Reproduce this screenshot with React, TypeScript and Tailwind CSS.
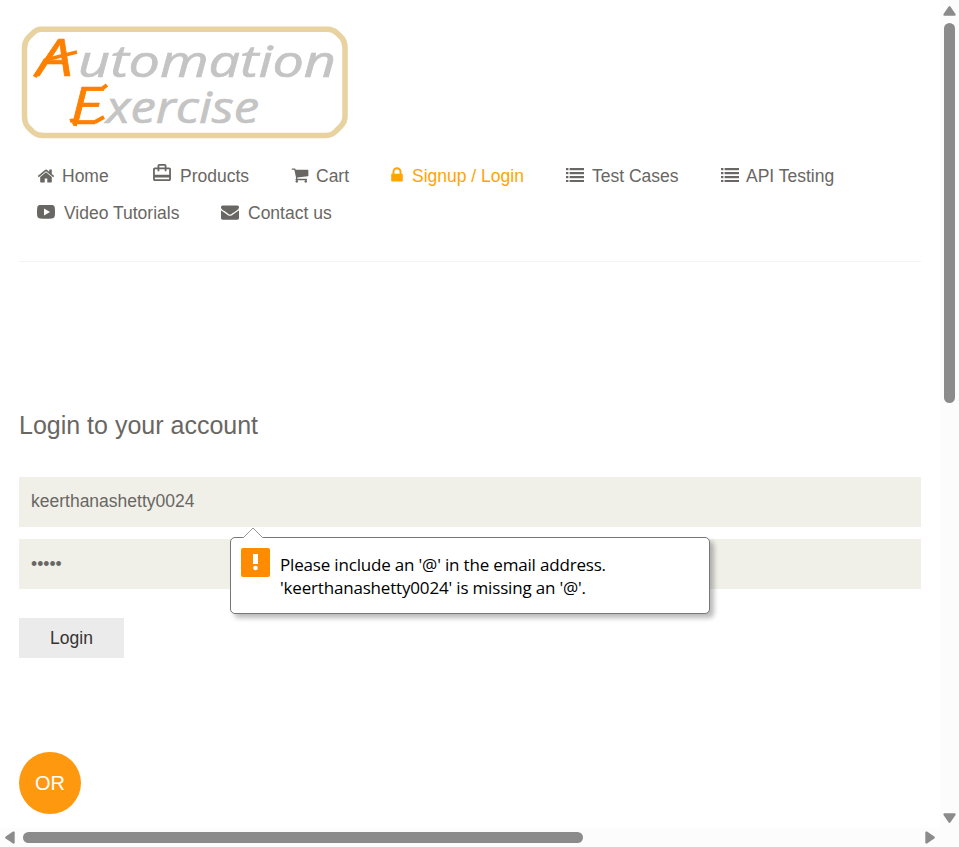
import type { ReactNode } from "react";

const HOME =
  "M1472 992v480q0 26-19 45t-45 19h-384v-384h-256v384h-384q-26 0-45-19t-19-45v-480q0-1 .5-3t.5-3l575-474 575 474q1 2 1 6zm223-69l-62 74q-8 9-21 11h-3q-13 0-21-7l-692-577-692 577q-12 8-24 7-13-2-21-11l-62-74q-8-10-7-23.5t11-21.5l719-599q32-26 76-26t76 26l244 204v-195q0-14 9-23t23-9h192q14 0 23 9t9 23v408l219 182q10 8 11 21.5t-7 23.5z";
const CART =
  "M704 1536q0 52-38 90t-90 38-90-38-38-90 38-90 90-38 90 38 38 90zm896 0q0 52-38 90t-90 38-90-38-38-90 38-90 90-38 90 38 38 90zm128-1088v512q0 24-16.5 42.5t-40.5 21.5l-1044 122q13 60 13 70 0 16-24 64h920q26 0 45 19t19 45-19 45-45 19h-1024q-26 0-45-19t-19-45q0-11 8-31.5t16-36 21.5-40 15.5-29.5l-177-823h-204q-26 0-45-19t-19-45 19-45 45-19h256q16 0 28.5 6.5t19.5 15.5 13 24.5 8 26 5.5 29.5 4.5 26h1201q26 0 45 19t19 45z";
const LOCK =
  "M640 768h512v-192q0-106-75-181t-181-75-181 75-75 181v192zm832 96v576q0 40-28 68t-68 28h-960q-40 0-68-28t-28-68v-576q0-40 28-68t68-28h32v-192q0-184 132-316t316-132 316 132 132 316v192h32q40 0 68 28t28 68z";
const ENVELOPE =
  "M1792 710v794q0 66-47 113t-113 47h-1472q-66 0-113-47t-47-113v-794q44 49 101 87 362 246 497 345 57 42 92.5 65.5t94.5 48 110 24.5h2q51 0 110-24.5t94.5-48 92.5-65.5q170-123 498-345 57-39 100-87zm0-294q0 79-49 151t-122 123q-376 261-468 325-10 7-42.5 31t-54 38.5-52 32.5-57.5 27-50 9h-2q-23 0-50-9t-57.5-27-52-32.5-54-38.5-42.5-31q-91-64-262-182.5t-205-142.5q-62-42-117-115.5t-55-136.5q0-78 41.5-130t118.5-52h1472q65 0 112.5 47t47.5 113z";

function Glyph({ d, box = "0 0 1792 1792", className }: { d: string; box?: string; className: string }) {
  return (
    <svg viewBox={box} className={`shrink-0 fill-current ${className}`}>
      <path d={d} />
    </svg>
  );
}

function ListIcon() {
  return (
    <svg viewBox="0 0 18 14" className="mb-px h-3.5 w-[18px] shrink-0 fill-current">
      {[0, 4, 8, 12].map((y) => (
        <g key={y}>
          <rect x="0" y={y} width="2.4" height="2.2" />
          <rect x="3.6" y={y} width="14.4" height="2.2" />
        </g>
      ))}
    </svg>
  );
}

function NavItem({ icon, label, className }: { icon: ReactNode; label: string; className: string }) {
  return (
    <li className={`flex h-[37px] shrink-0 items-center whitespace-nowrap ${className}`}>
      {icon}
      <span className="pt-0.5">{label}</span>
    </li>
  );
}

function Logo() {
  return (
    <svg viewBox="0 0 328 114" className="h-[114px] w-[328px] overflow-visible">
      <path
        d="M20 4.200H307Q312 4.200 316 8L321 13Q324 17 324 23V91Q324 97 320 101L315 106Q311 110.500 305 110.500H22Q16 110.500 12 107L7 102Q3.500 98 3.500 92V23Q3.500 17 7 13L11 9Q15 4.200 20 4.200Z"
        fill="none"
        stroke="#e8d2a0"
        strokeWidth="5.500"
      />
      <g fontFamily="'Open Sans', sans-serif" fontStyle="italic" fontWeight="500">
        <g fill="#ff8000" stroke="#ff8000" strokeWidth="0.7" fontSize="51">
          <text x="16" y="51" textLength="36" lengthAdjust="spacingAndGlyphs">A</text>
          <path d="M14 52L24 35L56 27" fill="none" strokeWidth="3.500" />
          <text x="49" y="99" textLength="32" lengthAdjust="spacingAndGlyphs">E</text>
          <path d="M49 96Q55 94 54 101M82 63L86 60M74 97L83 92" fill="none" strokeWidth="4" />
        </g>
        <g fill="#c4c4c4" stroke="#c4c4c4" strokeWidth="0.7" fontSize="44">
          <text x="57" y="52" textLength="258" lengthAdjust="spacingAndGlyphs">utomation</text>
          <text x="85" y="98" textLength="153" lengthAdjust="spacingAndGlyphs">xercise</text>
        </g>
      </g>
    </svg>
  );
}

export default function App() {
  return (
    <div className="flex h-[847px] w-[959px] flex-col overflow-hidden bg-white font-['Liberation_Sans',Arial,sans-serif] text-[17.5px] text-[#696763]">
      <div className="flex h-[828px]">
        <main className="w-[940px] pr-[19px] pl-[19px]">
          <header className="h-[262px] border-b border-[#f3f3f3] pt-[25px] pl-0.5">
            <Logo />
            <nav className="mt-[18px] pl-4">
              <ul className="flex">
                <NavItem className="w-[116px]" label="Home" icon={<Glyph d={HOME} className="mr-[7px] size-[18px]" />} />
                <NavItem
                  className="w-[139px]"
                  label="Products"
                  icon={
                    <Glyph
                      box="2 2 20 19"
                      className="mr-[9px] mb-[7px] h-[17px] w-[18px]"
                      d="M20 6h-3V4c0-1.110-.89-2-2-2H9c-1.110 0-2 .89-2 2v2H4c-1.110 0-2 .89-2 2v11c0 1.110.89 2 2 2h16c1.110 0 2-.89 2-2V8c0-1.110-.89-2-2-2zM9 4h6v2H9V4zm11 15H4v-2h16v2zm0-5H4V8h3v2h2V8h6v2h2V8h3v6z"
                    />
                  }
                />
                <NavItem className="w-[99px]" label="Cart" icon={<Glyph d={CART} className="mr-[7px] mb-px -ml-px size-[18px]" />} />
                <NavItem
                  className="w-[175px] text-[#ffa500]"
                  label="Signup / Login"
                  icon={<Glyph d={LOCK} box="320 0 1152 1792" className="mr-[9px] mb-px h-[18px] w-3" />}
                />
                <NavItem className="w-[155px] gap-2" label="Test Cases" icon={<ListIcon />} />
                <NavItem className="gap-[7px]" label="API Testing" icon={<ListIcon />} />
              </ul>
              <ul className="flex">
                <NavItem
                  className="w-[184px] gap-[9px]"
                  label="Video Tutorials"
                  icon={
                    <svg viewBox="0 0 18 14" className="mb-px h-3.5 w-[18px] shrink-0 fill-current">
                      <path fillRule="evenodd" d="M3 0Q9-.4 15 0Q17.600.2 17.800 3Q18.200 7 17.800 11Q17.600 13.400 15 13.600Q9 14 3 13.600Q.4 13.400.2 11Q-.2 7 .2 3Q.4.2 3 0ZM7 3.500V10.500L13 7Z" />
                    </svg>
                  }
                />
                <NavItem className="gap-[9px]" label="Contact us" icon={<Glyph d={ENVELOPE} className="mb-px size-[18px]" />} />
              </ul>
            </nav>
          </header>

          <section>
            <h2 className="mt-[146px] h-[34px] text-[25px] leading-[34px]">Login to your account</h2>
            <form className="relative mt-[35px]" noValidate onSubmit={(e) => e.preventDefault()}>
              <input
                className="block h-[50px] w-full bg-[#f0f0e9] px-3 pb-0.5 outline-none"
                type="text"
                defaultValue="keerthanashetty0024"
              />
              <input
                className="mt-3 block h-[50px] w-full bg-[#f0f0e9] px-3 outline-none"
                type="password"
                defaultValue="12345"
              />
              <button className="mt-[29px] block h-10 w-[105px] bg-[#ebebeb] text-[#363432]">Login</button>

              <div className="absolute top-[60px] left-[211px] flex h-[77px] w-[480px] rounded-[5px] border border-[#777] bg-white pt-2.5 pl-2.5 shadow-[4px_4px_5px_rgba(0,0,0,0.27)]">
                <svg viewBox="0 0 22 12" className="absolute -top-[11px] left-[11px] h-3 w-[22px]">
                  <path d="M0 11.500L11 1L22 11.500V12H0Z" fill="#fff" />
                  <path d="M1 11L11 1L21 11" fill="none" stroke="#999" />
                </svg>
                <svg viewBox="0 0 29 29" className="size-[29px] shrink-0">
                  <rect width="29" height="29" rx="2" fill="#ff8c00" />
                  <rect x="12" y="6" width="5" height="10" fill="#fff" />
                  <circle cx="14.500" cy="20" r="2.300" fill="#fff" />
                </svg>
                <p className="mt-[5px] ml-2.5 font-['Open_Sans',sans-serif] text-[17px] leading-[23px] tracking-[-0.18px] whitespace-nowrap text-black">
                  Please include an '@' in the email address.
                  <br />
                  'keerthanashetty0024' is missing an '@'.
                </p>
              </div>
            </form>
            <div className="mt-[94px] flex size-[62px] items-center justify-center rounded-full bg-[#fe980f] text-[20px] text-white">
              OR
            </div>
          </section>
        </main>

        <aside className="flex w-[19px] flex-col items-center bg-[#fcfcfc] pt-1.5">
          <svg viewBox="0 0 13 10" className="h-2.5 w-[13px] fill-[#8b8b8b]">
            <path d="M5.500.7Q6.500-.5 7.500.7L12.500 8Q13 9.700 11.500 9.700H1.500Q0 9.700.5 8Z" />
          </svg>
          <div className="mt-[7px] h-[380px] w-[11px] rounded-full bg-[#8b8b8b]" />
          <svg viewBox="0 0 13 10" className="mt-[410px] h-2.5 w-[13px] rotate-180 fill-[#8b8b8b]">
            <path d="M5.500.7Q6.500-.5 7.500.7L12.500 8Q13 9.700 11.500 9.700H1.500Q0 9.700.5 8Z" />
          </svg>
        </aside>
      </div>
      <footer className="flex h-[19px] items-center bg-[#fcfcfc] pl-[5px]">
        <svg viewBox="0 0 10 13" className="h-[13px] w-2.5 fill-[#8b8b8b]">
          <path d="M.7 5.500Q-.5 6.500.7 7.500L8 12.500Q9.700 13 9.700 11.500V1.500Q9.700 0 8 .5Z" />
        </svg>
        <div className="ml-2 h-[11px] w-[560px] rounded-full bg-[#8b8b8b]" />
        <svg viewBox="0 0 10 13" className="ml-[342px] h-[13px] w-2.5 rotate-180 fill-[#8b8b8b]">
          <path d="M.7 5.500Q-.5 6.500.7 7.500L8 12.500Q9.700 13 9.700 11.500V1.500Q9.700 0 8 .5Z" />
        </svg>
      </footer>
    </div>
  );
}
